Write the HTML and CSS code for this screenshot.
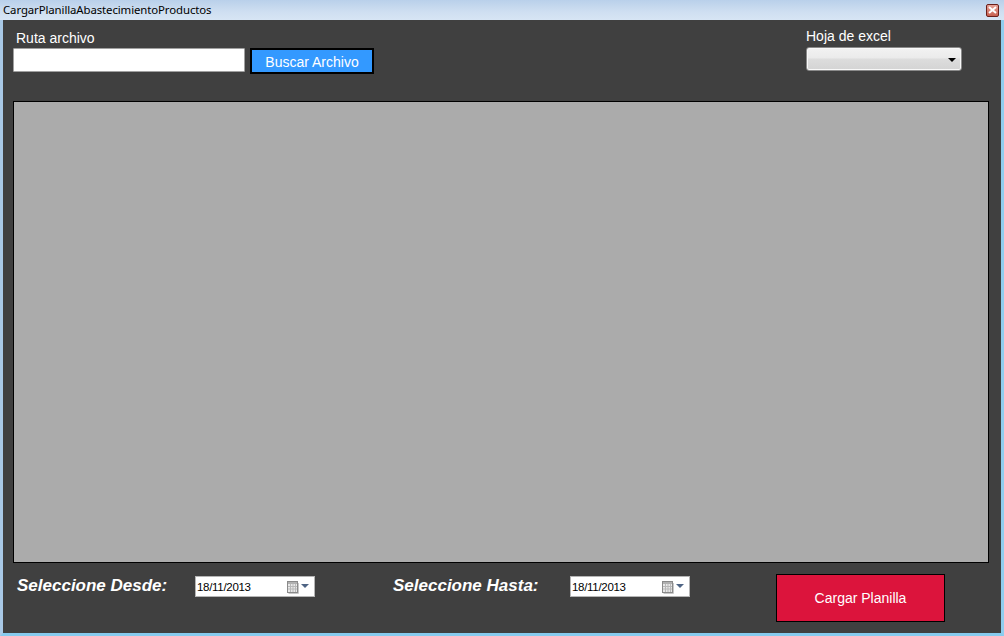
FILE: index.html
```html
<!DOCTYPE html>
<html>
<head>
<meta charset="utf-8">
<link rel="stylesheet" href="styles.css">
</head>
<body>
<div class="window">
  <div class="titlebar">
    <span class="title">CargarPlanillaAbastecimientoProductos</span>
    <span class="close"><svg width="9" height="8" viewBox="0 0 9 8"><path d="M1 1 L8 7 M8 1 L1 7" stroke="#fff" stroke-width="2"/></svg></span>
  </div>
  <div class="client">
    <div class="top">
      <div class="file-group">
        <div class="label">Ruta archivo</div>
        <div class="file-row">
          <div class="textbox"></div>
          <div class="btn-blue">Buscar Archivo</div>
        </div>
      </div>
      <div class="sheet-group">
        <div class="label label-sheet">Hoja de excel</div>
        <div class="combo"><span class="combo-arrow"></span></div>
      </div>
    </div>
    <div class="grid"></div>
    <div class="bottom">
      <div class="sel-label sel-desde">Seleccione Desde:</div>
      <div class="datepicker">
        <span class="date-text">18/11/2013</span>
        <span class="cal-icon">
          <svg width="12" height="13" viewBox="0 0 12 13">
            <rect x="0.5" y="0.5" width="10" height="11" fill="#e8e8e8" stroke="#8a8a8a"/>
            <rect x="1" y="1" width="9" height="2" fill="#b0b0b0"/>
            <path d="M3.5 3v8 M6 3v8 M8.5 3v8 M1 5.5h9 M1 8h9" stroke="#b8b8b8" stroke-width="1"/>
            <path d="M11.5 2v10.5H1.5" stroke="#c8c8c8" fill="none"/>
          </svg>
        </span>
        <span class="dd-arrow"></span>
      </div>
      <div class="sel-label sel-hasta">Seleccione Hasta:</div>
      <div class="datepicker">
        <span class="date-text">18/11/2013</span>
        <span class="cal-icon">
          <svg width="12" height="13" viewBox="0 0 12 13">
            <rect x="0.5" y="0.5" width="10" height="11" fill="#e8e8e8" stroke="#8a8a8a"/>
            <rect x="1" y="1" width="9" height="2" fill="#b0b0b0"/>
            <path d="M3.5 3v8 M6 3v8 M8.5 3v8 M1 5.5h9 M1 8h9" stroke="#b8b8b8" stroke-width="1"/>
            <path d="M11.5 2v10.5H1.5" stroke="#c8c8c8" fill="none"/>
          </svg>
        </span>
        <span class="dd-arrow"></span>
      </div>
      <div class="btn-red">Cargar Planilla</div>
    </div>
  </div>
</div>
</body>
</html>
```

FILE: styles.css
```css
html, body {
  margin: 0;
  padding: 0;
}
body {
  width: 1004px;
  height: 636px;
  overflow: hidden;
  font-family: "Liberation Sans", Arial, sans-serif;
}
.window {
  width: 1004px;
  height: 636px;
  box-sizing: border-box;
  display: flex;
  flex-direction: column;
  border-left: 3px solid #a9c9e6;
  border-right: 3px solid #8fcdee;
  border-bottom: 3px solid #86cbee;
  background: #bcd2ea;
}
.titlebar {
  height: 20px;
  flex: none;
  display: flex;
  align-items: center;
  justify-content: space-between;
  margin: 0 -3px;
  padding: 0 5px 0 3px;
  background: linear-gradient(#b9d0ea, #cfdff1 60%, #d7e5f4);
}
.title {
  font-family: "Noto Sans", "Open Sans", sans-serif;
  font-size: 11.4px;
  color: #000;
  letter-spacing: -0.1px;
  line-height: 20px;
}
.close {
  width: 11px;
  height: 11px;
  border: 1px solid #6b1f1a;
  border-radius: 2px;
  background: linear-gradient(#e6a197, #c8604f);
  display: flex;
  align-items: center;
  justify-content: center;
}
.client {
  flex: 1;
  background: #404040;
  display: flex;
  flex-direction: column;
}
.top {
  height: 81px;
  box-sizing: border-box;
  display: flex;
  justify-content: space-between;
  padding: 0 39px 0 10px;
}
.label {
  color: #fff;
  font-size: 14px;
  line-height: 16px;
}
.file-group {
  padding-top: 10px;
}
.file-group .label {
  margin-left: 3px;
  margin-bottom: 2px;
}
.file-row {
  display: flex;
  align-items: flex-start;
  gap: 5px;
}
.textbox {
  width: 232px;
  height: 24px;
  box-sizing: border-box;
  background: #fff;
  border: 1px solid #a0a0a0;
  border-radius: 1px;
}
.btn-blue {
  width: 124px;
  height: 26px;
  box-sizing: border-box;
  background: #3399ff;
  border: 2px solid #000;
  color: #fff;
  font-size: 14px;
  display: flex;
  align-items: center;
  justify-content: center;
  padding-top: 2px;
}
.sheet-group {
  padding-top: 8px;
}
.label-sheet {
  margin-bottom: 3px;
}
.combo {
  width: 156px;
  height: 24px;
  box-sizing: border-box;
  border: 1px solid #8a8a8a;
  border-radius: 3px;
  background: linear-gradient(#f2f2f2 0%, #ebebeb 45%, #dddddd 50%, #d4d4d4 100%);
  box-shadow: inset 0 0 0 1px #f8f8f8;
  display: flex;
  align-items: center;
  justify-content: flex-end;
  padding-right: 5px;
}
.combo-arrow {
  width: 0;
  height: 0;
  border-left: 4px solid transparent;
  border-right: 4px solid transparent;
  border-top: 4px solid #000;
  margin-top: 2px;
}
.grid {
  margin-left: 10px;
  width: 976px;
  height: 462px;
  box-sizing: border-box;
  background: #ababab;
  border: 1px solid #000;
  flex: none;
}
.bottom {
  display: flex;
  align-items: flex-start;
  padding-left: 14px;
  margin-top: 11px;
}
.sel-label {
  color: #fff;
  font-size: 17px;
  font-weight: bold;
  font-style: italic;
  margin-top: 2px;
  line-height: 20px;
}
.sel-desde {
  width: 178px;
}
.sel-hasta {
  width: 177px;
  margin-left: 78px;
}
.datepicker {
  width: 120px;
  height: 21px;
  box-sizing: border-box;
  margin-top: 2px;
  background: #fff;
  border: 1px solid #b5b5b5;
  display: flex;
  align-items: center;
  padding-left: 1px;
}
.date-text {
  font-family: "Liberation Sans", Arial, sans-serif;
  font-size: 11.5px;
  color: #000;
  flex: 1;
  letter-spacing: -0.3px;
}
.cal-icon {
  display: flex;
  margin-right: 2px;
  margin-top: 1px;
}
.dd-arrow {
  width: 0;
  height: 0;
  border-left: 4px solid transparent;
  border-right: 4px solid transparent;
  border-top: 4px solid #4e6484;
  margin-right: 5px;
  margin-top: -2px;
}
.btn-red {
  margin-left: 86px;
  width: 169px;
  height: 48px;
  box-sizing: border-box;
  background: #dc143c;
  border: 1px solid #000;
  color: #fff;
  font-size: 14px;
  display: flex;
  align-items: center;
  justify-content: center;
}
```
